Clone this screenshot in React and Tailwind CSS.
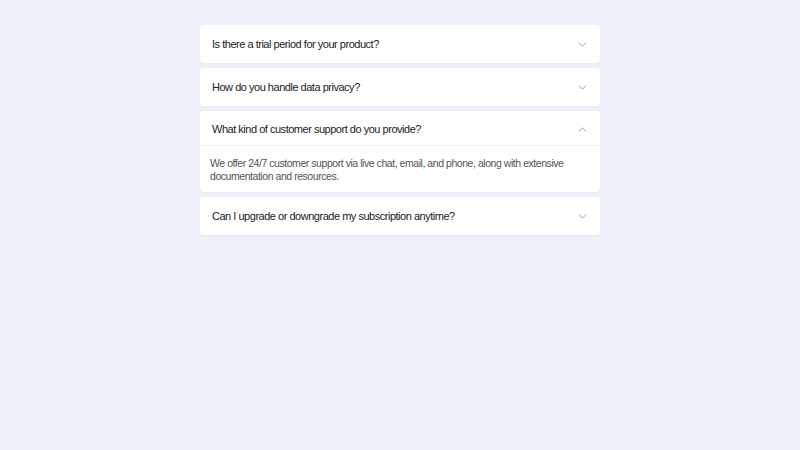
import React, { useState } from 'react'
import { ChevronDown, ChevronUp } from 'lucide-react'

const faqs = [
  {
    q: 'Is there a trial period for your product?',
    a: 'Yes, we offer a 14-day free trial with full access to all features.',
  },
  {
    q: 'How do you handle data privacy?',
    a: 'We encrypt all data in transit and at rest and never share it with third parties.',
  },
  {
    q: 'What kind of customer support do you provide?',
    a: 'We offer 24/7 customer support via live chat, email, and phone, along with extensive documentation and resources.',
  },
  {
    q: 'Can I upgrade or downgrade my subscription anytime?',
    a: 'Yes, you can change your plan at any time from your account settings.',
  },
]

export default function App() {
  const [open, setOpen] = useState(2)

  return (
    <div
      className="min-h-screen bg-[#eef1f9] pt-[25px]"
      style={{ fontFamily: '"Liberation Sans", Arial, sans-serif' }}
    >
      <div className="w-[400px] mx-auto flex flex-col gap-[5px]">
        {faqs.map((item, i) => {
          const isOpen = open === i
          return (
            <div key={i} className="bg-white rounded-[4px] shadow-[0_1px_2px_rgba(0,0,0,0.03)]">
              <button
                onClick={() => setOpen(isOpen ? -1 : i)}
                className={`w-full flex items-center justify-between pl-3 pr-[11px] text-left ${
                  isOpen ? 'h-[35px] pt-[2px] border-b border-[#eef0f4]' : 'h-[38px]'
                }`}
              >
                <span className="text-[11px] tracking-[-0.48px] text-[#222]">{item.q}</span>
                {isOpen ? (
                  <ChevronUp size={13} strokeWidth={1.5} className="text-[#8a8a8a]" />
                ) : (
                  <ChevronDown size={13} strokeWidth={1.5} className="text-[#8a8a8a]" />
                )}
              </button>
              {isOpen && (
                <div className="px-[10px] pt-[11px] pb-[9px] text-[10.5px] tracking-[-0.45px] leading-[13px] text-[#555]">
                  {item.a}
                </div>
              )}
            </div>
          )
        })}
      </div>
    </div>
  )
}
